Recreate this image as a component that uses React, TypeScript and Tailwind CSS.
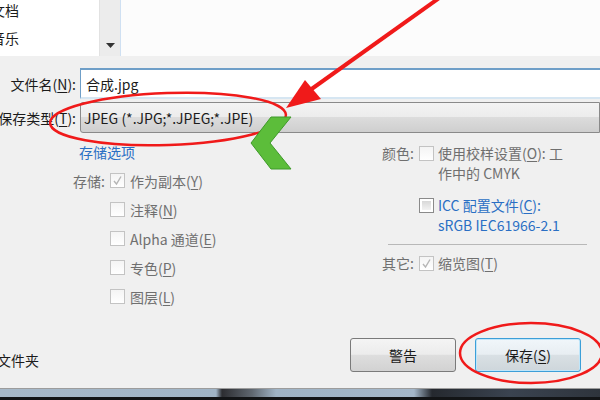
import React from "react";

const font = { fontFamily: '"Noto Sans CJK SC", "Noto Sans", sans-serif' };

type boxProps = { checked?: boolean; strong?: boolean };

const CheckBox = ({ checked, strong }: boxProps) => {
  return (
    <div
      className={
        strong
          ? "w-[15px] h-[15px] shrink-0 border border-[#8a8a8a] bg-white p-[2px]"
          : "w-[15px] h-[15px] shrink-0 border border-[#c3c3c3] bg-[linear-gradient(#f4f4f4,#ffffff)]"
      }
    >
      {strong && <div className="w-full h-full bg-[linear-gradient(#d8d8d8,#f2f2f2)]" />}
      {checked && (
        <svg width="13" height="13" viewBox="0 0 13 13">
          <path d="M3 7 L5.5 10 L10 2.5" fill="none" stroke="#b5b5b5" strokeWidth="1.4" />
        </svg>
      )}
    </div>
  );
};

const Mn = ({ c }: { c: string }) => <span className="underline underline-offset-2">{c}</span>;

const OptionRow = ({ label, children, checked }: { label?: string; children: React.ReactNode; checked?: boolean }) => (
  <div className="flex items-center h-[29px]">
    <div className="w-[31px] flex justify-end whitespace-nowrap text-[#6f6f6f]">{label}</div>
    <div className="ml-[5px]">
      <CheckBox checked={checked} />
    </div>
    <div className="ml-[5px] whitespace-nowrap text-[#6f6f6f]">{children}</div>
  </div>
);

export default function App() {
  return (
    <div
      className="w-[600px] h-[400px] bg-[#f0f0f0] relative overflow-hidden flex flex-col text-[14px] leading-[20px] text-[#1b1b1b]"
      style={font}
    >
      {/* folder list */}
      <div className="h-[56px] flex shrink-0">
        <div className="w-[99px] bg-white flex flex-col overflow-hidden">
          <div className="-ml-[9px] h-[28px] -mt-[4px] flex items-center whitespace-nowrap">文档</div>
          <div className="-ml-[9px] h-[28px] flex items-center whitespace-nowrap">音乐</div>
        </div>
        <div className="w-[21px] bg-[#ececec] border-l border-[#e2e2e2] flex flex-col justify-end items-center pb-[8px]">
          <svg width="9" height="5" viewBox="0 0 9 5">
            <path d="M0 0 H9 L4.5 5 Z" fill="#333" />
          </svg>
        </div>
        <div className="flex-1 bg-[#fcfcfc] border-l border-[#cfe0f2]" />
      </div>

      {/* file name */}
      <div className="flex items-center mt-[12px] h-[31px] shrink-0">
        <div className="w-[76px] flex justify-end whitespace-nowrap">
          文件名(<Mn c="N" />):
        </div>
        <div className="ml-[4px] flex-1 h-full bg-white border-t-2 border-l border-[#6f9fc8] border-b-2 border-b-[#d6e6f2] flex items-center pl-[5px]">
          合成.jpg
        </div>
      </div>

      {/* type */}
      <div className="flex items-center mt-[3px] h-[31px] shrink-0">
        <div className="w-[76px] flex justify-end whitespace-nowrap">
          保存类型(<Mn c="T" />):
        </div>
        <div className="ml-[4px] flex-1 h-full rounded-l-[3px] border border-[#8a8a8a] bg-[linear-gradient(#f3f3f3_0%,#ececec_48%,#dcdcdc_50%,#cfcfcf_100%)] flex items-center pl-[3px]">
          JPEG (*.JPG;*.JPEG;*.JPE)
        </div>
      </div>

      {/* options */}
      <div className="flex mt-[9px] h-[196px] shrink-0">
        <div className="w-[300px] pl-[74px] flex flex-col">
          <div className="ml-[5px] h-[20px] text-[#2a6fc4]">存储选项</div>
          <div className="mt-[4px]">
            <OptionRow label="存储:" checked>
              作为副本(<Mn c="Y" />)
            </OptionRow>
            <OptionRow>
              注释(<Mn c="N" />)
            </OptionRow>
            <OptionRow>
              Alpha 通道(<Mn c="E" />)
            </OptionRow>
            <OptionRow>
              专色(<Mn c="P" />)
            </OptionRow>
            <OptionRow>
              图层(<Mn c="L" />)
            </OptionRow>
          </div>
        </div>

        <div className="flex-1 pl-[78px] pr-[13px] flex flex-col pt-[1px]">
          <div className="flex">
            <div className="w-[36px] flex justify-end whitespace-nowrap text-[#6f6f6f]">颜色:</div>
            <div className="ml-[5px] mt-[3px]">
              <CheckBox />
            </div>
            <div className="ml-[4px] text-[#6f6f6f] whitespace-nowrap">
              <div>
                使用校样设置(<Mn c="O" />): 工
              </div>
              <div>作中的 CMYK</div>
            </div>
          </div>
          <div className="flex mt-[12px]">
            <div className="w-[36px]" />
            <div className="ml-[5px] mt-[3px]">
              <CheckBox strong />
            </div>
            <div className="ml-[4px] text-[#2a6fc4] whitespace-nowrap">
              <div>
                ICC 配置文件(<Mn c="C" />):
              </div>
              <div>sRGB IEC61966-2.1</div>
            </div>
          </div>
          <div className="mt-[9px] ml-[10px] h-px bg-[#b8b8b8]" />
          <div className="flex mt-[8px]">
            <div className="w-[36px] flex justify-end whitespace-nowrap text-[#6f6f6f]">其它:</div>
            <div className="ml-[5px] mt-[3px]">
              <CheckBox checked />
            </div>
            <div className="ml-[4px] text-[#6f6f6f] whitespace-nowrap">
              缩览图(<Mn c="T" />)
            </div>
          </div>
        </div>
      </div>

      {/* bottom */}
      <div className="flex h-[34px] shrink-0">
        <div className="-ml-[3px] self-end mb-[2px] whitespace-nowrap">文件夹</div>
        <div className="flex-1" />
        <button className="w-[106px] h-full rounded-[3px] border border-[#7a7a7a] bg-[linear-gradient(#f4f4f4_0%,#ececec_48%,#dedede_50%,#d2d2d2_100%)] text-[#1b1b1b]">
          警告
        </button>
        <button className="ml-[19px] mr-[19px] w-[106px] h-full rounded-[3px] border border-[#3c9fd8] shadow-[inset_0_0_0_1px_#bfe6fa] bg-[linear-gradient(#f0f6fa_0%,#e8eef2_48%,#d9e0e4_50%,#ced6db_100%)] text-[#1b1b1b]">
          保存(<Mn c="S" />)
        </button>
      </div>

      <div className="flex-1" />

      {/* task bar */}
      <div className="h-[12px] shrink-0 flex flex-col">
        <div className="h-px bg-[#9c9c9c]" />
        <div className="h-[8px] bg-[linear-gradient(90deg,#a6b8c8_0%,#a0b4c6_36%,#2c2d31_37%,#5f6770_42%,#9fb3c5_46%,#a4b7c9_69%,#25292f_72%,#3a4350_85%,#2e343c_100%)]" />
        <div className="flex-1 bg-[#121416]" />
      </div>

      {/* annotations */}
      <svg className="absolute inset-0 pointer-events-none" width="600" height="400" viewBox="0 0 600 400">
        <ellipse cx="168" cy="119" rx="118" ry="26" fill="none" stroke="#f01a1a" strokeWidth="2.5" transform="rotate(-2 168 119)" />
        <ellipse cx="531" cy="353" rx="71" ry="30" fill="none" stroke="#f01a1a" strokeWidth="2.5" />
        <line x1="442" y1="-4" x2="306" y2="93" stroke="#f01a1a" strokeWidth="4" />
        <polygon points="286,108 305,80 321,99" fill="#f01a1a" />
        <polygon points="271,117 291,117 270,143 291,169 271,169 251,143" fill="#5cbd3a" stroke="#3f9a2a" strokeWidth="1" />
      </svg>
    </div>
  );
}
